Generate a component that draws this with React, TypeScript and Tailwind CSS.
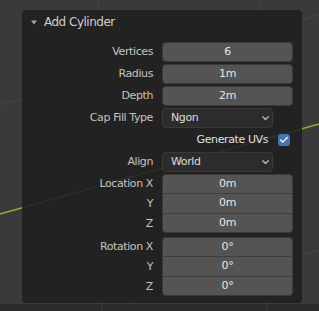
import { Check } from "lucide-react";

// Blender-style "Add Cylinder" redo panel floating over the 3D viewport.

const FONT = "font-['DejaVu_Sans',sans-serif]";

function Viewport() {
  return (
    <svg className="absolute inset-0" width={319} height={311} viewBox="0 0 319 311">
      <rect width={319} height={311} fill="#3a3a3a" />
      <line x1={0} y1={105} x2={319} y2={15} stroke="#474747" strokeWidth={1} />
      <line x1={0} y1={340} x2={319} y2={250} stroke="#474747" strokeWidth={1} />
      <line x1={98} y1={0} x2={102} y2={311} stroke="#474747" strokeWidth={1} />
      <line x1={260} y1={0} x2={267} y2={311} stroke="#474747" strokeWidth={1} />
      <line x1={0} y1={214} x2={319} y2={124} stroke="#86b52a" strokeWidth={1.5} />
      <rect y={304} width={319} height={7} fill="#2a2a2a" />
      <line x1={102} y1={304} x2={102} y2={311} stroke="#3a3a3a" />
      <line x1={267} y1={304} x2={267} y2={311} stroke="#3a3a3a" />
    </svg>
  );
}

function Label({ children }: { children: string }) {
  return (
    <div className="flex h-[20px] items-center justify-end text-[11px] tracking-[-0.4px] text-[#c4c4c4]">
      {children}
    </div>
  );
}

function NumField({ value }: { value: string }) {
  return (
    <div className="flex h-[20px] items-center justify-center rounded-[4px] border border-[#3a3a3a] bg-[#545454] text-[11px] tracking-[-0.3px] text-[#e6e6e6]">
      {value}
    </div>
  );
}

function Dropdown({ value }: { value: string }) {
  return (
    <div className="flex h-[20px] w-[111px] items-center justify-between rounded-[4px] border border-[#3a3a3a] bg-[#2c2c2c] pl-[8px] pr-[3px] text-[11px] tracking-[-0.4px] text-[#dcdcdc]">
      <span>{value}</span>
      <svg width={7} height={5} viewBox="0 0 7 5">
        <path d="M0.8 0.8 L3.5 3.6 L6.2 0.8" fill="none" stroke="#b4b4b4" strokeWidth={1.4} strokeLinecap="round" strokeLinejoin="round" />
      </svg>
    </div>
  );
}

function Group({ values }: { values: string[] }) {
  return (
    <div className="flex h-[59px] flex-col overflow-hidden rounded-[4px] border border-[#3a3a3a] bg-[#545454] text-[11px] tracking-[-0.3px] text-[#e6e6e6]">
      {values.map((v, i) => (
        <div
          key={i}
          className={`flex flex-1 items-center justify-center ${i > 0 ? "border-t border-[#3f3f3f]" : ""}`}
        >
          {v}
        </div>
      ))}
    </div>
  );
}

export default function App() {
  return (
    <div className={`relative h-[311px] w-[319px] overflow-hidden ${FONT}`}>
      <Viewport />
      <div className="relative ml-[22px] mt-[10px] h-[293px] w-[280px] rounded-[4px] bg-[rgba(31,31,31,0.88)] pl-[10px] pr-[9px]">
        <div className="-ml-[1px] flex h-[24px] items-center gap-[7px] text-[12px] tracking-[-0.5px] text-[#cfcfcf]">
          <svg width={6} height={5} viewBox="0 0 6 5">
            <path d="M0 0.5 H6 L3 4.5 Z" fill="#a8a8a8" />
          </svg>
          <span>Add Cylinder</span>
        </div>

        <div className="mt-[8px] grid grid-cols-[121px_131px] gap-x-[9px] gap-y-[2px]">
          <Label>Vertices</Label>
          <NumField value="6" />
          <Label>Radius</Label>
          <NumField value="1m" />
          <Label>Depth</Label>
          <NumField value="2m" />
          <Label>Cap Fill Type</Label>
          <Dropdown value="Ngon" />
          <div />
          <div className="flex h-[20px] items-center justify-end gap-[10px] pr-[3px] text-[11px] tracking-[-0.4px] text-[#e0e0e0]">
            <span>Generate UVs</span>
            <span className="flex h-[12px] w-[12px] items-center justify-center rounded-[3px] bg-[#4772b3]">
              <Check size={10} strokeWidth={3} className="text-white" />
            </span>
          </div>
          <Label>Align</Label>
          <Dropdown value="World" />
          <div className="flex flex-col justify-between">
            <Label>Location X</Label>
            <Label>Y</Label>
            <Label>Z</Label>
          </div>
          <Group values={["0m", "0m", "0m"]} />
        </div>

        <div className="mt-[3px] grid grid-cols-[121px_131px] gap-x-[9px]">
          <div className="flex flex-col justify-between">
            <Label>Rotation X</Label>
            <Label>Y</Label>
            <Label>Z</Label>
          </div>
          <Group values={["0°", "0°", "0°"]} />
        </div>
      </div>
    </div>
  );
}
